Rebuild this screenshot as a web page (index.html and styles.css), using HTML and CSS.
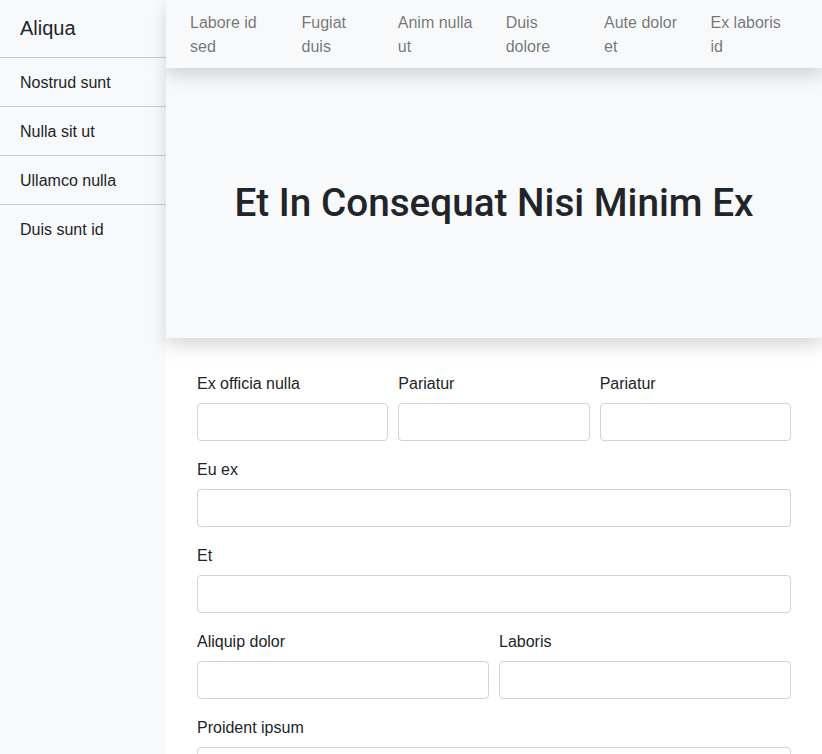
FILE: index.html
```html
<!DOCTYPE html>
<html>
<head>
<meta charset="utf-8">
<link rel="stylesheet" href="styles.css">
</head>
<body>
<div class="layout">
  <aside class="sidebar">
    <div class="brand">Aliqua</div>
    <ul class="side-list">
      <li>Nostrud sunt</li>
      <li>Nulla sit ut</li>
      <li>Ullamco nulla</li>
      <li>Duis sunt id</li>
    </ul>
  </aside>
  <main class="main">
    <nav class="topnav">
      <a class="nav-link">Labore id sed</a>
      <a class="nav-link">Fugiat duis</a>
      <a class="nav-link">Anim nulla ut</a>
      <a class="nav-link">Duis dolore</a>
      <a class="nav-link">Aute dolor et</a>
      <a class="nav-link">Ex laboris id</a>
    </nav>
    <section class="hero">
      <h1>Et In Consequat Nisi Minim Ex</h1>
    </section>
    <form class="form">
      <div class="row three">
        <div class="field"><label>Ex officia nulla</label><input type="text"></div>
        <div class="field"><label>Pariatur</label><input type="text"></div>
        <div class="field"><label>Pariatur</label><input type="text"></div>
      </div>
      <div class="row one">
        <div class="field"><label>Eu ex</label><input type="text"></div>
      </div>
      <div class="row one">
        <div class="field"><label>Et</label><input type="text"></div>
      </div>
      <div class="row two">
        <div class="field"><label>Aliquip dolor</label><input type="text"></div>
        <div class="field"><label>Laboris</label><input type="text"></div>
      </div>
      <div class="row one">
        <div class="field"><label>Proident ipsum</label><input type="text"></div>
      </div>
    </form>
  </main>
</div>
</body>
</html>
```
FILE: styles.css
```css
* { box-sizing: border-box; }
html, body { margin: 0; padding: 0; }
body {
  font-family: "Liberation Sans", Arial, sans-serif;
  font-size: 16px;
  line-height: 24px;
  color: #212529;
  background: #fff;
  overflow: hidden;
}
.layout {
  display: flex;
  min-height: 754px;
}
.sidebar {
  width: 166px;
  flex: 0 0 166px;
  background: #f8f9fa;
}
.brand {
  font-size: 20px;
  line-height: 24px;
  padding: 16px 20px 17px;
  height: 58px;
  border-bottom: 1px solid #c8c9ca;
}
.side-list {
  list-style: none;
  margin: 0;
  padding: 0;
}
.side-list li {
  padding: 13px 20px 11px;
  border-bottom: 1px solid #c8c9ca;
}
.side-list li:last-child { border-bottom: none; }
.main {
  flex: 1;
  display: flex;
  flex-direction: column;
  min-width: 0;
}
.topnav {
  position: relative;
  z-index: 2;
  display: flex;
  height: 68px;
  padding: 11px 24px 9px 8px;
  background: #f8f9fa;
  box-shadow: 0 8px 16px rgba(0,0,0,.15);
}
.nav-link {
  padding: 0 16px;
  color: rgba(0,0,0,.55);
  text-decoration: none;
}
.hero {
  position: relative;
  z-index: 1;
  height: 270px;
  background: #f8f9fa;
  box-shadow: 0 8px 16px rgba(0,0,0,.15);
  display: flex;
  align-items: center;
  justify-content: center;
}
.hero h1 {
  margin: 0;
  font-family: Roboto, "Liberation Sans", sans-serif;
  font-size: 38.7px;
  line-height: 48px;
  font-weight: 500;
}
.form {
  padding: 33px 31px 0 31px;
  background: #fff;
}
.row {
  display: grid;
  gap: 10px;
  margin-bottom: 16px;
}
.row.three { grid-template-columns: 1fr 1fr 1fr; }
.row.two { grid-template-columns: 1fr 1fr; }
.row.one { grid-template-columns: 1fr; }
.field label {
  display: block;
  padding-top: 1px;
  line-height: 23px;
  margin-bottom: 8px;
}
.field input {
  display: block;
  width: 100%;
  height: 38px;
  border: 1px solid #ced4da;
  border-radius: 4px;
  background: #fff;
  font: inherit;
  padding: 6px 12px;
}
```
